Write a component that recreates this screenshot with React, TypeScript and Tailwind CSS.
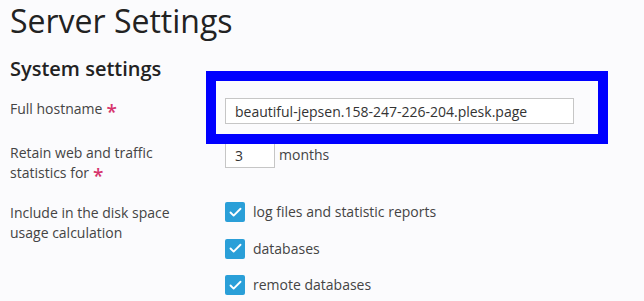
import { Check } from "lucide-react";

function Required() {
  return (
    <span className="relative top-[5px] ml-[4px] text-[19px] leading-[0] font-semibold text-[#d6336c]">
      *
    </span>
  );
}

function CheckItem({ label }: { label: string }) {
  return (
    <label className="flex h-5 items-center">
      <span className="flex h-5 w-5 items-center justify-center rounded-[2px] bg-[#2a9fd8]">
        <Check size={15} strokeWidth={3} className="text-white" />
      </span>
      <span className="ml-[8px] leading-5">{label}</span>
    </label>
  );
}

export default function App() {
  return (
    <div
      className="relative h-[301px] w-[644px] overflow-hidden bg-[#fbfbfd] pl-[10px] text-[14px] text-[#444]"
      style={{ fontFamily: '"Open Sans", sans-serif' }}
    >
      <h1 className="mt-[1px] text-[32px] leading-[40px] font-normal text-[#222]">
        Server Settings
      </h1>
      <h2 className="mt-[14px] text-[20px] leading-[28px] font-semibold text-[#222]">
        System settings
      </h2>

      {/* Full hostname */}
      <div className="mt-[15px] flex">
        <div className="w-[215px] pt-[1px] leading-5">
          Full hostname
          <Required />
        </div>
        <input
          className="h-[26px] w-[349px] border border-[#c6c6c6] bg-white px-[9px] text-[14px] text-[#333] outline-none"
          defaultValue="beautiful-jepsen.158-247-226-204.plesk.page"
        />
      </div>

      {/* Retain statistics */}
      <div className="mt-[18px] flex">
        <div className="w-[215px] pt-[1px] leading-5">
          Retain web and traffic
          <br />
          statistics for
          <Required />
        </div>
        <div className="flex h-[26px] items-center">
          <input
            className="h-[26px] w-[50px] border border-[#c6c6c6] bg-white px-[9px] text-[14px] text-[#333] outline-none"
            defaultValue="3"
          />
          <span className="ml-[4px] leading-5">months</span>
        </div>
      </div>

      {/* Disk space */}
      <div className="mt-[19px] flex">
        <div className="w-[215px] pt-[1px] leading-5">
          Include in the disk space
          <br />
          usage calculation
        </div>
        <div className="flex flex-col gap-[16.5px]">
          <CheckItem label="log files and statistic reports" />
          <CheckItem label="databases" />
          <CheckItem label="remote databases" />
        </div>
      </div>

      {/* highlight frame */}
      <div className="pointer-events-none absolute left-[206px] top-[71px] h-[73px] w-[402px] border-[10px] border-[#0000ff]" />
    </div>
  );
}
